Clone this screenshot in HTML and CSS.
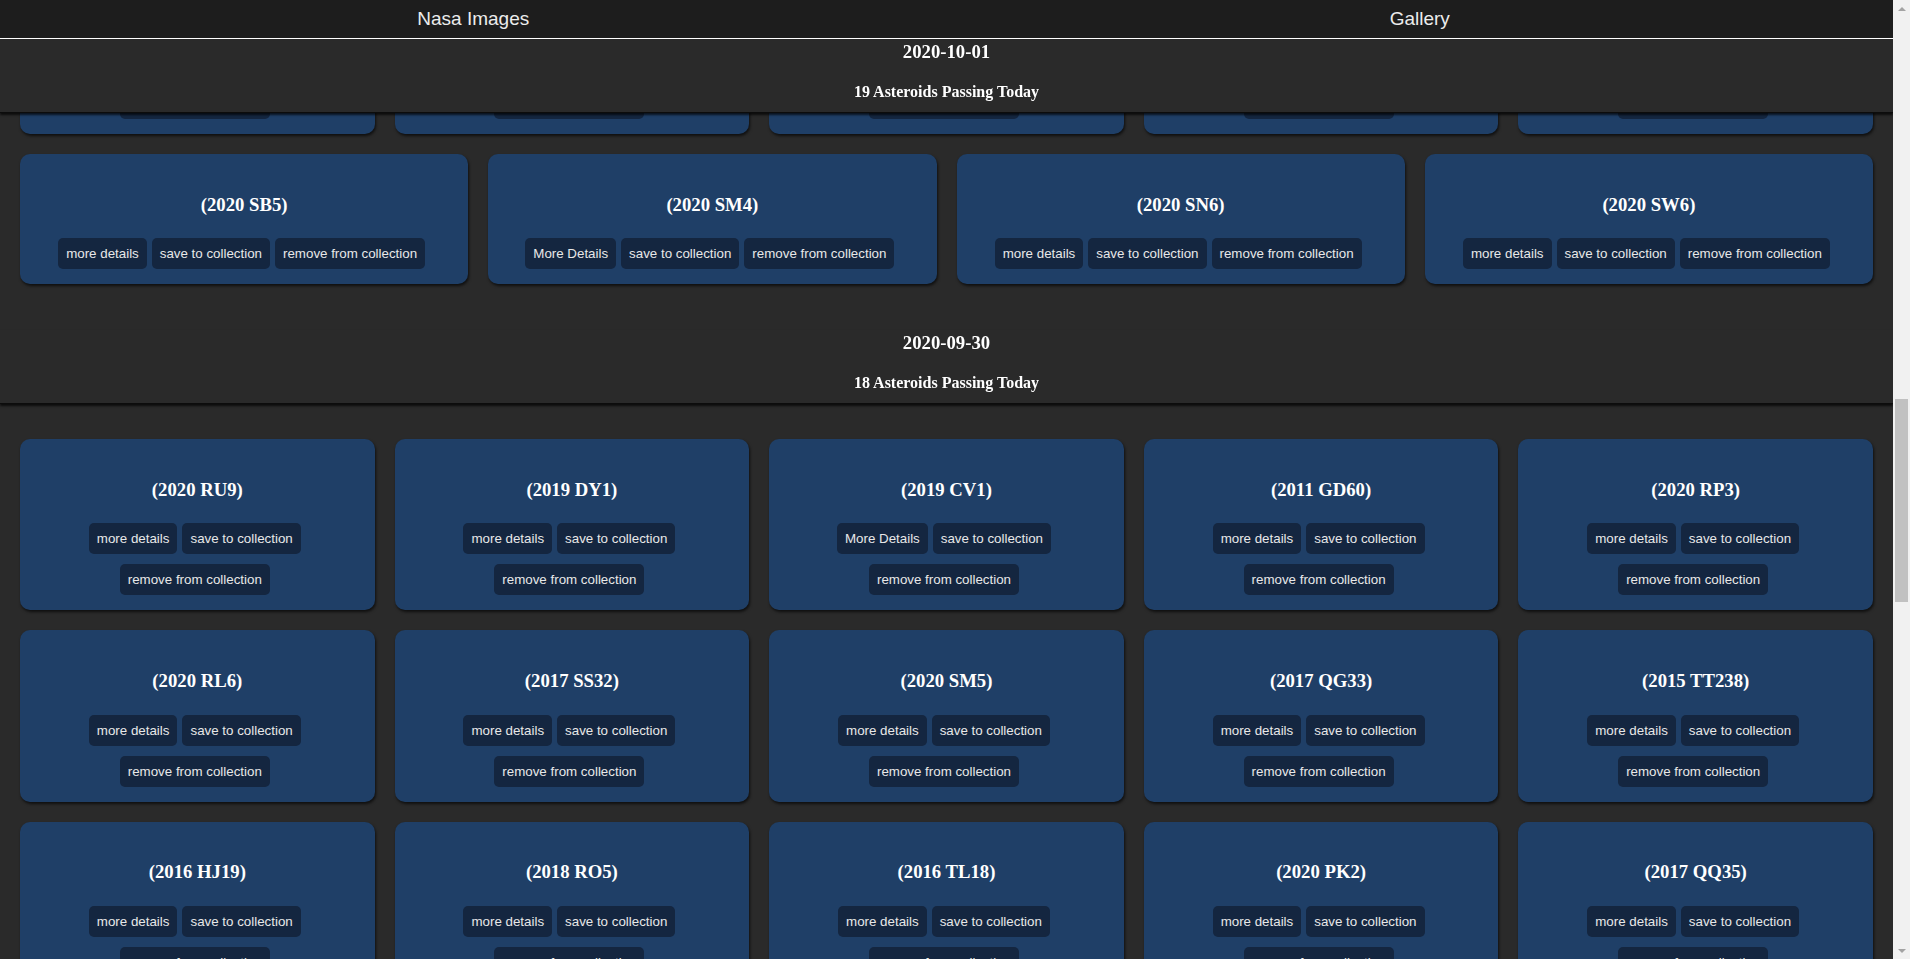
FILE: index.html
```html
<!DOCTYPE html>
<html lang="en">
<head>
<meta charset="utf-8">
<title>Nasa Images</title>
<link rel="stylesheet" href="styles.css">
<script src="script.js" defer></script>
</head>
<body>
<div class="app" id="app">
<nav class="nav">
  <a class="nav-link" href="#">Nasa Images</a>
  <a class="nav-link" href="#">Gallery</a>
</nav>
<main>
<section class="day" id="d1002">
  <header class="day-head"><h3 class="day-date">2020-10-02</h3><h4 class="day-count">29 Asteroids Passing Today</h4></header>
  <div class="cards">
    <div class="card"><h3 class="card-title">(2020 SL1)</h3><div class="card-actions"><button class="btn">more details</button><button class="btn">save to collection</button><button class="btn">remove from collection</button></div></div>
    <div class="card"><h3 class="card-title">(2020 ST1)</h3><div class="card-actions"><button class="btn">more details</button><button class="btn">save to collection</button><button class="btn">remove from collection</button></div></div>
    <div class="card"><h3 class="card-title">(2020 RZ6)</h3><div class="card-actions"><button class="btn">more details</button><button class="btn">save to collection</button><button class="btn">remove from collection</button></div></div>
    <div class="card"><h3 class="card-title">(2020 SO)</h3><div class="card-actions"><button class="btn">more details</button><button class="btn">save to collection</button><button class="btn">remove from collection</button></div></div>
    <div class="card"><h3 class="card-title">(2019 SU3)</h3><div class="card-actions"><button class="btn">more details</button><button class="btn">save to collection</button><button class="btn">remove from collection</button></div></div>
    <div class="card"><h3 class="card-title">(2020 SE5)</h3><div class="card-actions"><button class="btn">more details</button><button class="btn">save to collection</button><button class="btn">remove from collection</button></div></div>
    <div class="card"><h3 class="card-title">(2018 TE2)</h3><div class="card-actions"><button class="btn">more details</button><button class="btn">save to collection</button><button class="btn">remove from collection</button></div></div>
    <div class="card"><h3 class="card-title">(2020 SY4)</h3><div class="card-actions"><button class="btn">more details</button><button class="btn">save to collection</button><button class="btn">remove from collection</button></div></div>
    <div class="card"><h3 class="card-title">(2020 SK3)</h3><div class="card-actions"><button class="btn">more details</button><button class="btn">save to collection</button><button class="btn">remove from collection</button></div></div>
    <div class="card"><h3 class="card-title">(2017 UK8)</h3><div class="card-actions"><button class="btn">more details</button><button class="btn">save to collection</button><button class="btn">remove from collection</button></div></div>
    <div class="card"><h3 class="card-title">(2020 RX7)</h3><div class="card-actions"><button class="btn">more details</button><button class="btn">save to collection</button><button class="btn">remove from collection</button></div></div>
    <div class="card"><h3 class="card-title">(2020 SR2)</h3><div class="card-actions"><button class="btn">more details</button><button class="btn">save to collection</button><button class="btn">remove from collection</button></div></div>
    <div class="card"><h3 class="card-title">(2016 TF)</h3><div class="card-actions"><button class="btn">more details</button><button class="btn">save to collection</button><button class="btn">remove from collection</button></div></div>
    <div class="card"><h3 class="card-title">(2020 SH6)</h3><div class="card-actions"><button class="btn">more details</button><button class="btn">save to collection</button><button class="btn">remove from collection</button></div></div>
    <div class="card"><h3 class="card-title">(2020 SZ)</h3><div class="card-actions"><button class="btn">more details</button><button class="btn">save to collection</button><button class="btn">remove from collection</button></div></div>
    <div class="card"><h3 class="card-title">(2019 TQ5)</h3><div class="card-actions"><button class="btn">more details</button><button class="btn">save to collection</button><button class="btn">remove from collection</button></div></div>
    <div class="card"><h3 class="card-title">(2020 SA9)</h3><div class="card-actions"><button class="btn">more details</button><button class="btn">save to collection</button><button class="btn">remove from collection</button></div></div>
    <div class="card"><h3 class="card-title">(2020 RO6)</h3><div class="card-actions"><button class="btn">more details</button><button class="btn">save to collection</button><button class="btn">remove from collection</button></div></div>
    <div class="card"><h3 class="card-title">(2014 SS1)</h3><div class="card-actions"><button class="btn">more details</button><button class="btn">save to collection</button><button class="btn">remove from collection</button></div></div>
    <div class="card"><h3 class="card-title">(2020 ST7)</h3><div class="card-actions"><button class="btn">more details</button><button class="btn">save to collection</button><button class="btn">remove from collection</button></div></div>
    <div class="card"><h3 class="card-title">(2020 SC6)</h3><div class="card-actions"><button class="btn">more details</button><button class="btn">save to collection</button><button class="btn">remove from collection</button></div></div>
    <div class="card"><h3 class="card-title">(2020 RB3)</h3><div class="card-actions"><button class="btn">more details</button><button class="btn">save to collection</button><button class="btn">remove from collection</button></div></div>
    <div class="card"><h3 class="card-title">(2018 SQ13)</h3><div class="card-actions"><button class="btn">more details</button><button class="btn">save to collection</button><button class="btn">remove from collection</button></div></div>
    <div class="card"><h3 class="card-title">(2020 SG8)</h3><div class="card-actions"><button class="btn">more details</button><button class="btn">save to collection</button><button class="btn">remove from collection</button></div></div>
    <div class="card"><h3 class="card-title">(2020 SN)</h3><div class="card-actions"><button class="btn">more details</button><button class="btn">save to collection</button><button class="btn">remove from collection</button></div></div>
    <div class="card"><h3 class="card-title">(2019 QD)</h3><div class="card-actions"><button class="btn">more details</button><button class="btn">save to collection</button><button class="btn">remove from collection</button></div></div>
    <div class="card"><h3 class="card-title">(2020 SD1)</h3><div class="card-actions"><button class="btn">more details</button><button class="btn">save to collection</button><button class="btn">remove from collection</button></div></div>
    <div class="card"><h3 class="card-title">(2020 SP3)</h3><div class="card-actions"><button class="btn">more details</button><button class="btn">save to collection</button><button class="btn">remove from collection</button></div></div>
    <div class="card"><h3 class="card-title">(2015 TX24)</h3><div class="card-actions"><button class="btn">more details</button><button class="btn">save to collection</button><button class="btn">remove from collection</button></div></div>
  </div>
</section>

<section class="day" id="d1001">
  <header class="day-head"><h3 class="day-date">2020-10-01</h3><h4 class="day-count">19 Asteroids Passing Today</h4></header>
  <div class="cards">
    <div class="card"><h3 class="card-title">(2020 RK2)</h3><div class="card-actions"><button class="btn">more details</button><button class="btn">save to collection</button><button class="btn">remove from collection</button></div></div>
    <div class="card"><h3 class="card-title">(2020 SU2)</h3><div class="card-actions"><button class="btn">more details</button><button class="btn">save to collection</button><button class="btn">remove from collection</button></div></div>
    <div class="card"><h3 class="card-title">(2020 SJ5)</h3><div class="card-actions"><button class="btn">more details</button><button class="btn">save to collection</button><button class="btn">remove from collection</button></div></div>
    <div class="card"><h3 class="card-title">(2019 TM)</h3><div class="card-actions"><button class="btn">more details</button><button class="btn">save to collection</button><button class="btn">remove from collection</button></div></div>
    <div class="card"><h3 class="card-title">(2020 SF)</h3><div class="card-actions"><button class="btn">more details</button><button class="btn">save to collection</button><button class="btn">remove from collection</button></div></div>
    <div class="card"><h3 class="card-title">(2020 RW5)</h3><div class="card-actions"><button class="btn">more details</button><button class="btn">save to collection</button><button class="btn">remove from collection</button></div></div>
    <div class="card"><h3 class="card-title">(2017 TC1)</h3><div class="card-actions"><button class="btn">more details</button><button class="btn">save to collection</button><button class="btn">remove from collection</button></div></div>
    <div class="card"><h3 class="card-title">(2020 SG2)</h3><div class="card-actions"><button class="btn">more details</button><button class="btn">save to collection</button><button class="btn">remove from collection</button></div></div>
    <div class="card"><h3 class="card-title">(2020 SV3)</h3><div class="card-actions"><button class="btn">more details</button><button class="btn">save to collection</button><button class="btn">remove from collection</button></div></div>
    <div class="card"><h3 class="card-title">(2018 RY7)</h3><div class="card-actions"><button class="btn">more details</button><button class="btn">save to collection</button><button class="btn">remove from collection</button></div></div>
    <div class="card"><h3 class="card-title">(2020 SE3)</h3><div class="card-actions"><button class="btn">more details</button><button class="btn">save to collection</button><button class="btn">remove from collection</button></div></div>
    <div class="card"><h3 class="card-title">(2020 SQ7)</h3><div class="card-actions"><button class="btn">more details</button><button class="btn">save to collection</button><button class="btn">remove from collection</button></div></div>
    <div class="card"><h3 class="card-title">(2016 SA2)</h3><div class="card-actions"><button class="btn">more details</button><button class="btn">save to collection</button><button class="btn">remove from collection</button></div></div>
    <div class="card"><h3 class="card-title">(2020 SX2)</h3><div class="card-actions"><button class="btn">more details</button><button class="btn">save to collection</button><button class="btn">remove from collection</button></div></div>
    <div class="card"><h3 class="card-title">(2020 SZ4)</h3><div class="card-actions"><button class="btn">more details</button><button class="btn">save to collection</button><button class="btn">remove from collection</button></div></div>
    <div class="card"><h3 class="card-title">(2020 SB5)</h3><div class="card-actions"><button class="btn">more details</button><button class="btn">save to collection</button><button class="btn">remove from collection</button></div></div>
    <div class="card"><h3 class="card-title">(2020 SM4)</h3><div class="card-actions"><button class="btn">More Details</button><button class="btn">save to collection</button><button class="btn">remove from collection</button></div></div>
    <div class="card"><h3 class="card-title">(2020 SN6)</h3><div class="card-actions"><button class="btn">more details</button><button class="btn">save to collection</button><button class="btn">remove from collection</button></div></div>
    <div class="card"><h3 class="card-title">(2020 SW6)</h3><div class="card-actions"><button class="btn">more details</button><button class="btn">save to collection</button><button class="btn">remove from collection</button></div></div>
  </div>
</section>

<section class="day" id="d0930">
  <header class="day-head"><h3 class="day-date">2020-09-30</h3><h4 class="day-count">18 Asteroids Passing Today</h4></header>
  <div class="cards">
    <div class="card"><h3 class="card-title">(2020 RU9)</h3><div class="card-actions"><button class="btn">more details</button><button class="btn">save to collection</button><button class="btn">remove from collection</button></div></div>
    <div class="card"><h3 class="card-title">(2019 DY1)</h3><div class="card-actions"><button class="btn">more details</button><button class="btn">save to collection</button><button class="btn">remove from collection</button></div></div>
    <div class="card"><h3 class="card-title">(2019 CV1)</h3><div class="card-actions"><button class="btn">More Details</button><button class="btn">save to collection</button><button class="btn">remove from collection</button></div></div>
    <div class="card"><h3 class="card-title">(2011 GD60)</h3><div class="card-actions"><button class="btn">more details</button><button class="btn">save to collection</button><button class="btn">remove from collection</button></div></div>
    <div class="card"><h3 class="card-title">(2020 RP3)</h3><div class="card-actions"><button class="btn">more details</button><button class="btn">save to collection</button><button class="btn">remove from collection</button></div></div>
    <div class="card"><h3 class="card-title">(2020 RL6)</h3><div class="card-actions"><button class="btn">more details</button><button class="btn">save to collection</button><button class="btn">remove from collection</button></div></div>
    <div class="card"><h3 class="card-title">(2017 SS32)</h3><div class="card-actions"><button class="btn">more details</button><button class="btn">save to collection</button><button class="btn">remove from collection</button></div></div>
    <div class="card"><h3 class="card-title">(2020 SM5)</h3><div class="card-actions"><button class="btn">more details</button><button class="btn">save to collection</button><button class="btn">remove from collection</button></div></div>
    <div class="card"><h3 class="card-title">(2017 QG33)</h3><div class="card-actions"><button class="btn">more details</button><button class="btn">save to collection</button><button class="btn">remove from collection</button></div></div>
    <div class="card"><h3 class="card-title">(2015 TT238)</h3><div class="card-actions"><button class="btn">more details</button><button class="btn">save to collection</button><button class="btn">remove from collection</button></div></div>
    <div class="card"><h3 class="card-title">(2016 HJ19)</h3><div class="card-actions"><button class="btn">more details</button><button class="btn">save to collection</button><button class="btn">remove from collection</button></div></div>
    <div class="card"><h3 class="card-title">(2018 RO5)</h3><div class="card-actions"><button class="btn">more details</button><button class="btn">save to collection</button><button class="btn">remove from collection</button></div></div>
    <div class="card"><h3 class="card-title">(2016 TL18)</h3><div class="card-actions"><button class="btn">more details</button><button class="btn">save to collection</button><button class="btn">remove from collection</button></div></div>
    <div class="card"><h3 class="card-title">(2020 PK2)</h3><div class="card-actions"><button class="btn">more details</button><button class="btn">save to collection</button><button class="btn">remove from collection</button></div></div>
    <div class="card"><h3 class="card-title">(2017 QQ35)</h3><div class="card-actions"><button class="btn">more details</button><button class="btn">save to collection</button><button class="btn">remove from collection</button></div></div>
    <div class="card"><h3 class="card-title">(2020 SO3)</h3><div class="card-actions"><button class="btn">more details</button><button class="btn">save to collection</button><button class="btn">remove from collection</button></div></div>
    <div class="card"><h3 class="card-title">(2019 SB8)</h3><div class="card-actions"><button class="btn">more details</button><button class="btn">save to collection</button><button class="btn">remove from collection</button></div></div>
    <div class="card"><h3 class="card-title">(2020 RG3)</h3><div class="card-actions"><button class="btn">more details</button><button class="btn">save to collection</button><button class="btn">remove from collection</button></div></div>
  </div>
</section>

<section class="day" id="d0929">
  <header class="day-head"><h3 class="day-date">2020-09-29</h3><h4 class="day-count">31 Asteroids Passing Today</h4></header>
  <div class="cards">
    <div class="card"><h3 class="card-title">(2020 RM4)</h3><div class="card-actions"><button class="btn">more details</button><button class="btn">save to collection</button><button class="btn">remove from collection</button></div></div>
    <div class="card"><h3 class="card-title">(2020 SB1)</h3><div class="card-actions"><button class="btn">more details</button><button class="btn">save to collection</button><button class="btn">remove from collection</button></div></div>
    <div class="card"><h3 class="card-title">(2018 SH3)</h3><div class="card-actions"><button class="btn">more details</button><button class="btn">save to collection</button><button class="btn">remove from collection</button></div></div>
    <div class="card"><h3 class="card-title">(2020 RT8)</h3><div class="card-actions"><button class="btn">more details</button><button class="btn">save to collection</button><button class="btn">remove from collection</button></div></div>
    <div class="card"><h3 class="card-title">(2019 RQ2)</h3><div class="card-actions"><button class="btn">more details</button><button class="btn">save to collection</button><button class="btn">remove from collection</button></div></div>
    <div class="card"><h3 class="card-title">(2020 SC2)</h3><div class="card-actions"><button class="btn">more details</button><button class="btn">save to collection</button><button class="btn">remove from collection</button></div></div>
    <div class="card"><h3 class="card-title">(2016 SL)</h3><div class="card-actions"><button class="btn">more details</button><button class="btn">save to collection</button><button class="btn">remove from collection</button></div></div>
    <div class="card"><h3 class="card-title">(2020 RJ1)</h3><div class="card-actions"><button class="btn">more details</button><button class="btn">save to collection</button><button class="btn">remove from collection</button></div></div>
    <div class="card"><h3 class="card-title">(2020 SK)</h3><div class="card-actions"><button class="btn">more details</button><button class="btn">save to collection</button><button class="btn">remove from collection</button></div></div>
    <div class="card"><h3 class="card-title">(2017 RV1)</h3><div class="card-actions"><button class="btn">more details</button><button class="btn">save to collection</button><button class="btn">remove from collection</button></div></div>
    <div class="card"><h3 class="card-title">(2020 RN5)</h3><div class="card-actions"><button class="btn">more details</button><button class="btn">save to collection</button><button class="btn">remove from collection</button></div></div>
    <div class="card"><h3 class="card-title">(2020 SD4)</h3><div class="card-actions"><button class="btn">more details</button><button class="btn">save to collection</button><button class="btn">remove from collection</button></div></div>
    <div class="card"><h3 class="card-title">(2015 SZ2)</h3><div class="card-actions"><button class="btn">more details</button><button class="btn">save to collection</button><button class="btn">remove from collection</button></div></div>
    <div class="card"><h3 class="card-title">(2020 RY2)</h3><div class="card-actions"><button class="btn">more details</button><button class="btn">save to collection</button><button class="btn">remove from collection</button></div></div>
    <div class="card"><h3 class="card-title">(2020 SF1)</h3><div class="card-actions"><button class="btn">more details</button><button class="btn">save to collection</button><button class="btn">remove from collection</button></div></div>
    <div class="card"><h3 class="card-title">(2019 SM)</h3><div class="card-actions"><button class="btn">more details</button><button class="btn">save to collection</button><button class="btn">remove from collection</button></div></div>
    <div class="card"><h3 class="card-title">(2020 RE7)</h3><div class="card-actions"><button class="btn">more details</button><button class="btn">save to collection</button><button class="btn">remove from collection</button></div></div>
    <div class="card"><h3 class="card-title">(2020 SH)</h3><div class="card-actions"><button class="btn">more details</button><button class="btn">save to collection</button><button class="btn">remove from collection</button></div></div>
    <div class="card"><h3 class="card-title">(2018 RC4)</h3><div class="card-actions"><button class="btn">more details</button><button class="btn">save to collection</button><button class="btn">remove from collection</button></div></div>
    <div class="card"><h3 class="card-title">(2020 RA6)</h3><div class="card-actions"><button class="btn">more details</button><button class="btn">save to collection</button><button class="btn">remove from collection</button></div></div>
    <div class="card"><h3 class="card-title">(2020 SJ2)</h3><div class="card-actions"><button class="btn">more details</button><button class="btn">save to collection</button><button class="btn">remove from collection</button></div></div>
    <div class="card"><h3 class="card-title">(2014 RL12)</h3><div class="card-actions"><button class="btn">more details</button><button class="btn">save to collection</button><button class="btn">remove from collection</button></div></div>
    <div class="card"><h3 class="card-title">(2020 RS3)</h3><div class="card-actions"><button class="btn">more details</button><button class="btn">save to collection</button><button class="btn">remove from collection</button></div></div>
    <div class="card"><h3 class="card-title">(2020 SQ)</h3><div class="card-actions"><button class="btn">more details</button><button class="btn">save to collection</button><button class="btn">remove from collection</button></div></div>
    <div class="card"><h3 class="card-title">(2019 RH1)</h3><div class="card-actions"><button class="btn">more details</button><button class="btn">save to collection</button><button class="btn">remove from collection</button></div></div>
    <div class="card"><h3 class="card-title">(2020 RV4)</h3><div class="card-actions"><button class="btn">more details</button><button class="btn">save to collection</button><button class="btn">remove from collection</button></div></div>
    <div class="card"><h3 class="card-title">(2020 SA3)</h3><div class="card-actions"><button class="btn">more details</button><button class="btn">save to collection</button><button class="btn">remove from collection</button></div></div>
    <div class="card"><h3 class="card-title">(2017 SE19)</h3><div class="card-actions"><button class="btn">more details</button><button class="btn">save to collection</button><button class="btn">remove from collection</button></div></div>
    <div class="card"><h3 class="card-title">(2020 RD2)</h3><div class="card-actions"><button class="btn">more details</button><button class="btn">save to collection</button><button class="btn">remove from collection</button></div></div>
    <div class="card"><h3 class="card-title">(2020 SW)</h3><div class="card-actions"><button class="btn">more details</button><button class="btn">save to collection</button><button class="btn">remove from collection</button></div></div>
    <div class="card"><h3 class="card-title">(2016 RB1)</h3><div class="card-actions"><button class="btn">more details</button><button class="btn">save to collection</button><button class="btn">remove from collection</button></div></div>
  </div>
</section>
</main>
</div>
<div class="scrollbar" aria-hidden="true">
  <div class="sb-btn"><span class="sb-arrow sb-arrow-up"></span></div>
  <div class="sb-track"><div class="sb-thumb"></div></div>
  <div class="sb-btn"><span class="sb-arrow sb-arrow-down"></span></div>
</div>
</body>
</html>
```

FILE: styles.css
```css
* {
  box-sizing: border-box;
}

html,
body {
  margin: 0;
  height: 100%;
  overflow: hidden;
  background: #2a2a2a;
}

body {
  display: flex;
  font-family: "Liberation Serif", "Times New Roman", serif;
  color: #ffffff;
}

/* the page's own scrolling area */
.app {
  flex: 1 1 auto;
  min-width: 0;
  height: 100vh;
  overflow-y: scroll;
  scrollbar-width: none;
  background: #2a2a2a;
}

.app::-webkit-scrollbar {
  display: none;
}

/* classic scrollbar drawn beside the page */
.scrollbar {
  flex: 0 0 17px;
  height: 100vh;
  display: flex;
  flex-direction: column;
  background: #f1f1f1;
}

.sb-btn {
  flex: 0 0 17px;
  display: flex;
  align-items: center;
  justify-content: center;
}

.sb-arrow {
  width: 0;
  height: 0;
  border-left: 4px solid transparent;
  border-right: 4px solid transparent;
}

.sb-arrow-up {
  border-bottom: 4px solid #a3a3a3;
}

.sb-arrow-down {
  border-top: 4px solid #a3a3a3;
}

.sb-track {
  flex: 1 1 auto;
  padding: 0 2px;
}

.sb-thumb {
  margin-top: 382px;
  height: 203px;
  background: #c1c1c1;
}

/* top navigation */
.nav {
  position: sticky;
  top: 0;
  z-index: 10;
  display: flex;
  height: 39px;
  background: #1d1d1d;
  border-bottom: 1px solid #ffffff;
}

.nav-link {
  flex: 1 1 0;
  display: flex;
  align-items: center;
  justify-content: center;
  font-family: "Liberation Sans", Arial, sans-serif;
  font-size: 19px;
  color: #ececec;
  text-decoration: none;
}

/* a day of asteroids */
.day-head {
  position: sticky;
  top: 39px;
  z-index: 5;
  background: #2a2a2a;
  text-align: center;
  padding: 2px 0 11px;
  border-bottom: 1px solid #0c0c0c;
  box-shadow: 0 2px 2px rgba(0, 0, 0, 0.7);
}

.day-date {
  margin: 0;
  font-size: 18.72px;
  font-weight: bold;
}

.day-count {
  margin: 20px 0 0;
  font-size: 16px;
  font-weight: bold;
}

.cards {
  display: flex;
  flex-wrap: wrap;
  gap: 20px;
  padding: 35px 20px 46px;
}

.card {
  flex: 1 1 300px;
  background: #1f3f67;
  border-radius: 10px;
  padding: 21px 10px 10px;
  text-align: center;
  box-shadow: 1px 2px 3px rgba(0, 0, 0, 0.65);
}

.card-title {
  margin: 18.72px 0 18px;
  font-size: 18.72px;
  font-weight: bold;
  line-height: 21.5px;
}

.card-actions {
  display: flex;
  flex-wrap: wrap;
  justify-content: center;
}

.btn {
  margin: 5px 5px 5px 0;
  padding: 8px;
  border: 0;
  border-radius: 5px;
  background: #142640;
  color: #e8e8e8;
  font-family: "Liberation Sans", Arial, sans-serif;
  font-size: 13.333px;
  line-height: 15px;
  cursor: pointer;
}
```

FILE: script.js
```js
(function () {
  function place() {
    var app = document.getElementById('app');
    var target = document.getElementById('d0930');
    if (!app || !target) return;
    var y = target.getBoundingClientRect().top - app.getBoundingClientRect().top + app.scrollTop - 330;
    app.scrollTop = y;
  }
  place();
  window.addEventListener('load', place);
})();
```
